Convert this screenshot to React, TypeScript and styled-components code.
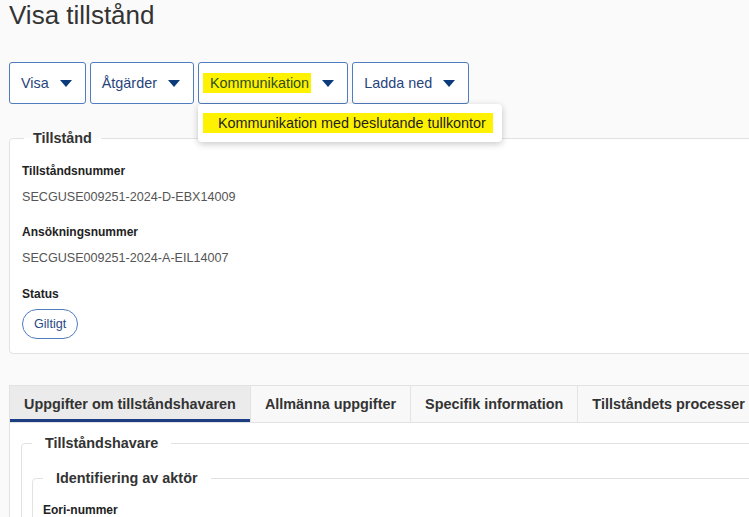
import React from "react";
import styled, { createGlobalStyle } from "styled-components";

const Global = createGlobalStyle`
  html, body { margin: 0; padding: 0; }
  body {
    background: #fafafa;
    font-family: "Liberation Sans", Arial, sans-serif;
    overflow: hidden;
  }
`;

const Page = styled.div`
  width: 1000px;
  padding: 0 0 40px 9px;
`;

const Title = styled.h1`
  margin: 0;
  font-size: 26px;
  font-weight: 400;
  line-height: 30px;
  color: #333;
`;

const Toolbar = styled.div`
  display: flex;
  gap: 4px;
  margin-top: 32px;
`;

const DropWrap = styled.div`
  position: relative;
`;

const MenuButton = styled.button`
  display: flex;
  align-items: center;
  gap: 11px;
  height: 42px;
  padding: 0 13px 0 11px;
  background: #fff;
  border: 1px solid #4f7dbf;
  border-radius: 3px;
  font-family: "Liberation Sans", Arial, sans-serif;
  font-size: 14.4px;
  color: #27447c;
  cursor: pointer;
`;

const Mark = styled.span<{ $left?: number; $right?: number; $dark?: boolean }>`
  background: #fff200;
  padding: 2px ${(p) => p.$right ?? 2}px 2px ${(p) => p.$left ?? 7}px;
  margin-left: -${(p) => p.$left ?? 7}px;
  color: ${(p) => (p.$dark ? "#1e1e1e" : "#2e4f1c")};
`;

const Caret = () => (
  <svg width="12" height="7" viewBox="0 0 12 7">
    <path d="M0 0 L12 0 L6 7 Z" fill="#0c3b7c" />
  </svg>
);

const Menu = styled.div`
  position: absolute;
  top: 100%;
  left: 0;
  z-index: 5;
  width: 304px;
  height: 38px;
  box-sizing: border-box;
  background: #fff;
  border-radius: 4px;
  box-shadow: 0 2px 7px rgba(0, 0, 0, 0.22);
  display: flex;
  align-items: center;
  padding-left: 20px;
  font-size: 14.4px;
  color: #1e1e1e;
`;

const Fieldset = styled.fieldset<{ $mt: number; $pt: number; $pl: number; $pb?: number; $bg?: string }>`
  margin: ${(p) => p.$mt}px 0 0 0;
  padding: ${(p) => p.$pt}px 0 ${(p) => p.$pb ?? 0}px ${(p) => p.$pl}px;
  border: 1px solid #e2e2e2;
  border-radius: 4px;
  background: ${(p) => p.$bg ?? "#fff"};
  min-width: 0;
`;

const Legend = styled.legend<{ $ml: number; $px: number }>`
  margin-left: ${(p) => p.$ml}px;
  padding: 0 ${(p) => p.$px}px;
  font-size: 14.4px;
  font-weight: 700;
  line-height: 17px;
  color: #333;
`;

const Field = styled.div<{ $mt?: number }>`
  margin-top: ${(p) => p.$mt ?? 0}px;
`;

const Label = styled.div`
  font-size: 12px;
  font-weight: 700;
  line-height: 14px;
  color: #222;
`;

const Value = styled.div`
  margin-top: 12px;
  font-size: 12.6px;
  line-height: 15px;
  color: #555;
`;

const Badge = styled.span`
  display: inline-flex;
  align-items: center;
  margin-top: 8px;
  height: 30px;
  box-sizing: border-box;
  padding: 0 11px;
  border: 1px solid #4f7dbf;
  border-radius: 15px;
  font-size: 12.6px;
  color: #2b4a86;
  background: #fff;
`;

const Panel = styled.div`
  margin-top: 31px;
  border-top: 1px solid #e2e2e2;
  border-left: 1px solid #e2e2e2;
  background: #fff;
`;

const TabRow = styled.div`
  display: flex;
  height: 36px;
  background: #f8f8f8;
  border-bottom: 1px solid #e2e2e2;
`;

const Tab = styled.div<{ $active?: boolean }>`
  display: flex;
  align-items: center;
  padding: 0 14px;
  border-right: 1px solid #e3e3e3;
  font-size: 14.4px;
  font-weight: 700;
  color: #333;
  white-space: nowrap;
  background: ${(p) => (p.$active ? "#ebebeb" : "transparent")};
  box-shadow: ${(p) => (p.$active ? "inset 0 -3px 0 #1d3d82" : "none")};
`;

const PanelBody = styled.div`
  padding: 12px 0 40px 11px;
`;

export default function App() {
  return (
    <Page>
      <Global />
      <Title>Visa tillstånd</Title>
      <Toolbar>
        <MenuButton>
          Visa <Caret />
        </MenuButton>
        <MenuButton>
          Åtgärder <Caret />
        </MenuButton>
        <DropWrap>
          <MenuButton>
            <Mark>Kommunikation</Mark> <Caret />
          </MenuButton>
          <Menu>
            <Mark $dark $left={15} $right={7}>
              Kommunikation med beslutande tullkontor
            </Mark>
          </Menu>
        </DropWrap>
        <MenuButton>
          Ladda ned <Caret />
        </MenuButton>
      </Toolbar>

      <Fieldset $mt={26} $pt={17} $pl={12} $pb={14}>
        <Legend $ml={2} $px={9}>Tillstånd</Legend>
        <Field>
          <Label>Tillståndsnummer</Label>
          <Value>SECGUSE009251-2024-D-EBX14009</Value>
        </Field>
        <Field $mt={20}>
          <Label>Ansökningsnummer</Label>
          <Value>SECGUSE009251-2024-A-EIL14007</Value>
        </Field>
        <Field $mt={21}>
          <Label>Status</Label>
          <Badge>Giltigt</Badge>
        </Field>
      </Fieldset>

      <Panel>
        <TabRow>
          <Tab $active>Uppgifter om tillståndshavaren</Tab>
          <Tab>Allmänna uppgifter</Tab>
          <Tab>Specifik information</Tab>
          <Tab>Tillståndets processer</Tab>
        </TabRow>
        <PanelBody>
          <Fieldset $mt={0} $pt={18} $pl={10}>
            <Legend $ml={0} $px={13}>Tillståndshavare</Legend>
            <Fieldset $mt={0} $pt={16} $pl={10} $pb={20}>
              <Legend $ml={0} $px={13}>Identifiering av aktör</Legend>
              <Label>Eori-nummer</Label>
            </Fieldset>
          </Fieldset>
        </PanelBody>
      </Panel>
    </Page>
  );
}
